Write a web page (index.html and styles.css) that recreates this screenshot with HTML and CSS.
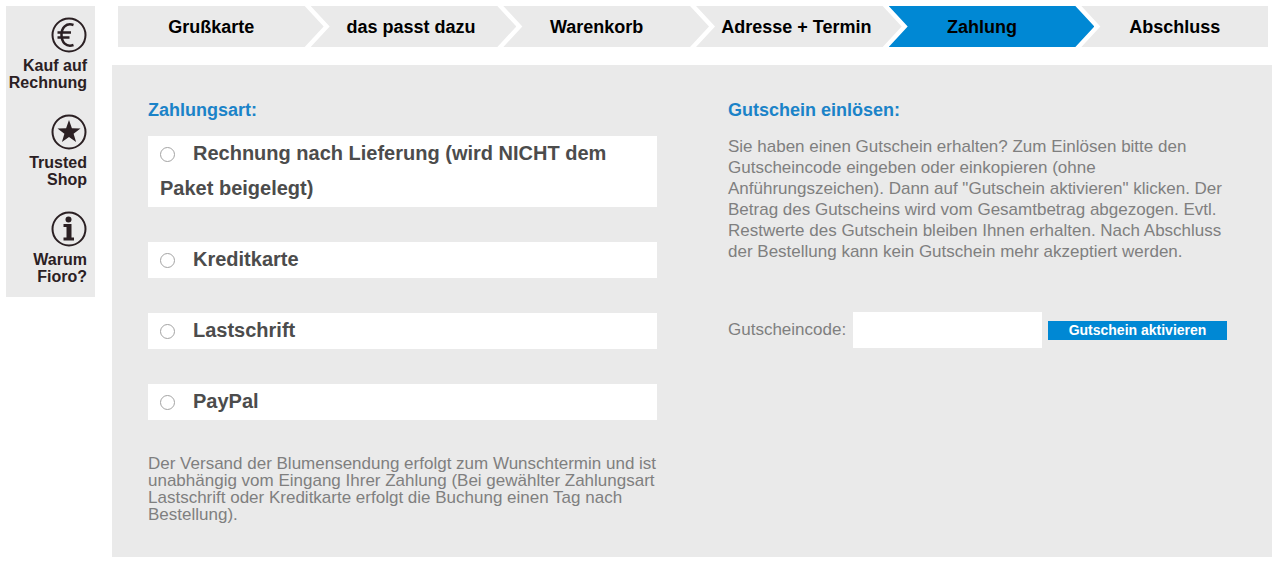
FILE: index.html
```
<!DOCTYPE html>
<html lang="de">
<head>
    <meta charset="UTF-8">
    <title>Fioro - Zahlung</title>
    <meta name="viewport" content="width=device-width, initial-scale=1.0">
    <link rel="stylesheet" href="styles.css">
</head>
<body>
    <aside class="sidebar">
        <a href="#" class="info">
            <svg width="36" height="36" viewBox="0 0 36 36">
                <circle cx="18" cy="18" r="16.5" fill="none" stroke="#2b2023" stroke-width="2"/>
                <path d="M22.500 8C15 5.500 10.500 11 10.500 18S15 30.500 22.500 28M6.500 15.500H20M6.500 20.500H18.500" fill="none" stroke="#2b2023" stroke-width="2.500"/>
            </svg>
            <span>Kauf auf Rechnung</span>
        </a>
        <a href="#" class="info">
            <svg width="36" height="36" viewBox="0 0 36 36">
                <circle cx="18" cy="18" r="16.5" fill="none" stroke="#2b2023" stroke-width="2"/>
                <path d="M18 6L20.900 14.300L29.500 14.400L22.600 19.700L25.100 28L18 23L10.900 28L13.400 19.700L6.500 14.400L15.100 14.300Z" fill="#2b2023"/>
            </svg>
            <span>Trusted<br>Shop</span>
        </a>
        <a href="#" class="info">
            <svg width="36" height="36" viewBox="0 0 36 36">
                <circle cx="18" cy="18" r="16.5" fill="none" stroke="#2b2023" stroke-width="2"/>
                <circle cx="17.500" cy="8.500" r="3" fill="#2b2023"/>
                <path d="M12.500 13H20.500V26.500H23V29.500H12.500V26.500H15.500V16H12.500Z" fill="#2b2023"/>
            </svg>
            <span>Warum<br>Fioro?</span>
        </a>
    </aside>

    <main>
        <nav class="steps">
            <a href="#" class="step first">Grußkarte</a>
            <a href="#" class="step indent">das passt dazu</a>
            <a href="#" class="step">Warenkorb</a>
            <a href="#" class="step indent">Adresse + Termin</a>
            <a href="#" class="step active">Zahlung</a>
            <a href="#" class="step last">Abschluss</a>
        </nav>

        <div class="panel">
            <section>
                <h2>Zahlungsart:</h2>
                <div class="methods">
                    <label class="method"><input type="radio" name="zahlungsart">Rechnung nach Lieferung (wird NICHT dem Paket beigelegt)</label>
                    <label class="method"><input type="radio" name="zahlungsart">Kreditkarte</label>
                    <label class="method"><input type="radio" name="zahlungsart">Lastschrift</label>
                    <label class="method"><input type="radio" name="zahlungsart">PayPal</label>
                </div>
                <p class="note">Der Versand der Blumensendung erfolgt zum Wunschtermin und ist unabhängig vom Eingang Ihrer Zahlung (Bei gewählter Zahlungsart Lastschrift oder Kreditkarte erfolgt die Buchung einen Tag nach Bestellung).</p>
            </section>

            <section>
                <h2>Gutschein einlösen:</h2>
                <p class="voucher-text">Sie haben einen Gutschein erhalten? Zum Einlösen bitte den Gutscheincode eingeben oder einkopieren (ohne Anführungszeichen). Dann auf "Gutschein aktivieren" klicken. Der Betrag des Gutscheins wird vom Gesamtbetrag abgezogen. Evtl. Restwerte des Gutschein bleiben Ihnen erhalten. Nach Abschluss der Bestellung kann kein Gutschein mehr akzeptiert werden.</p>
                <form class="voucher">
                    <label for="code">Gutscheincode:</label>
                    <input type="text" id="code">
                    <button type="button">Gutschein aktivieren</button>
                </form>
            </section>
        </div>
    </main>
</body>
</html>
```
FILE: styles.css
```
* {
    margin: 0;
    padding: 0;
    box-sizing: border-box;
}
body {
    font-family: "Liberation Sans", Arial, sans-serif;
    font-size: 17px;
    color: #7f7f7f;
    background: #fff;
    display: flex;
    align-items: flex-start;
    gap: 17px;
    padding: 6px 8px 7px 6px;
}
a {
    text-decoration: none;
}

/* sidebar */
.sidebar {
    width: 89px;
    flex-shrink: 0;
    background: #eaeaea;
    padding: 11px 8px 12px 0;
    display: flex;
    flex-direction: column;
    gap: 23px;
}
.info {
    display: flex;
    flex-direction: column;
    align-items: flex-end;
    gap: 4px;
    color: #2b2023;
    font-size: 16px;
    font-weight: bold;
    line-height: 17px;
    text-align: right;
}

/* steps */
main {
    flex: 1;
}
.steps {
    display: flex;
    padding: 0 4px 0 6px;
}
.step {
    box-sizing: content-box;
    flex: 1 1 0;
    height: 41px;
    padding-right: 19px;
    margin-left: -13px;
    background: #eaeaea;
    color: #000;
    font-size: 18px;
    font-weight: bold;
    line-height: 43px;
    text-align: center;
    white-space: nowrap;
    clip-path: polygon(0 0, calc(100% - 19px) 0, 100% 50%, calc(100% - 19px) 100%, 0 100%, 19px 50%);
}
.step.first {
    margin-left: 0;
    clip-path: polygon(0 0, calc(100% - 19px) 0, 100% 50%, calc(100% - 19px) 100%, 0 100%);
}
.step.last {
    padding-right: 0;
    clip-path: polygon(0 0, 100% 0, 100% 100%, 0 100%, 19px 50%);
}
.step.indent {
    text-indent: 14px;
}
.step.active {
    background: #0088d4;
}

/* content */
.panel {
    display: grid;
    grid-template-columns: 509fr 499fr;
    gap: 71px;
    margin-top: 18px;
    padding: 35px 45px 34px 36px;
    background: #eaeaea;
}
.panel section {
    min-width: 0;
}
h2 {
    color: #1b83c8;
    font-size: 18px;
    line-height: 21px;
}
.methods {
    display: flex;
    flex-direction: column;
    gap: 35px;
    margin-top: 15px;
}
.method {
    padding: 0 12px 1px;
    background: #fff;
    color: #4c4c4c;
    font-size: 20px;
    font-weight: bold;
    line-height: 35px;
}
.method input {
    appearance: none;
    width: 15px;
    height: 15px;
    margin-right: 18px;
    border: 1px solid #a3a3a3;
    border-radius: 50%;
    background: #fff;
    vertical-align: -2px;
}
.method input:checked {
    background: #0088d4;
    box-shadow: inset 0 0 0 3px #fff;
}
.note {
    margin-top: 35px;
    line-height: 17px;
}
.voucher-text {
    margin-top: 15px;
    line-height: 21px;
}
.voucher {
    display: flex;
    align-items: center;
    margin-top: 50px;
}
.voucher input {
    flex: 1;
    min-width: 0;
    height: 36px;
    margin: 0 6px 0 7px;
    padding: 0 8px;
    border: none;
    background: #fff;
    font: inherit;
}
.voucher button {
    width: 179px;
    height: 19px;
    border: none;
    background: #0088d4;
    color: #fff;
    font-family: inherit;
    font-size: 14px;
    font-weight: bold;
    line-height: 19px;
    cursor: pointer;
}
```
